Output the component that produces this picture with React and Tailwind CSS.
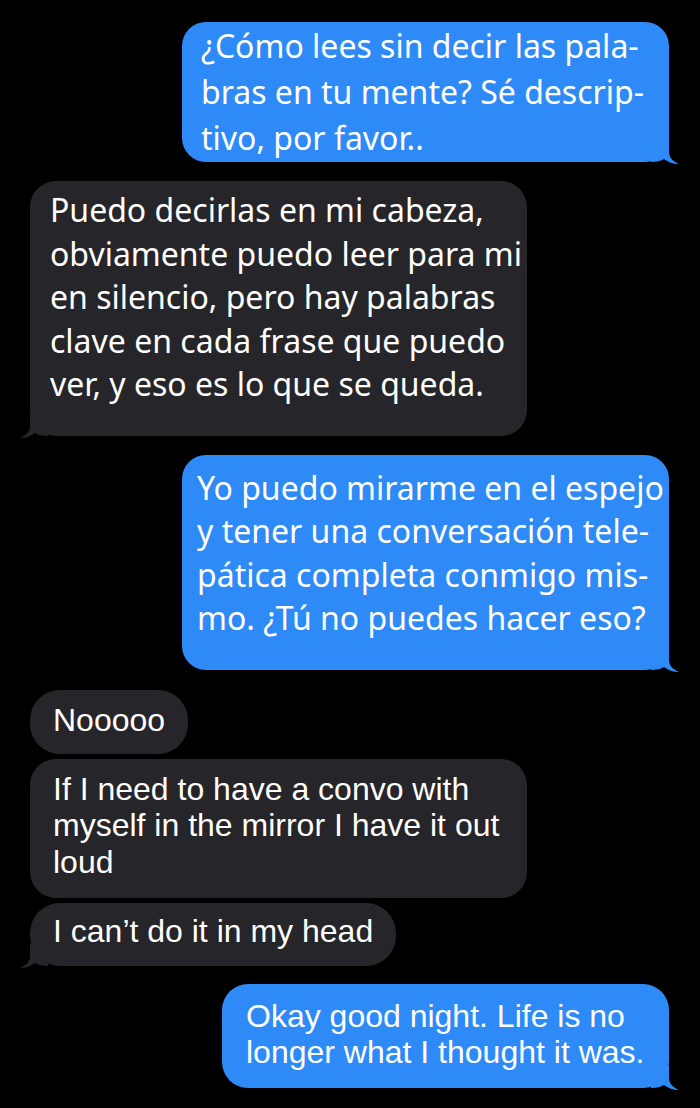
import { useState } from 'react';

const BLUE = '#2e8af6';
const GRAY = '#262529';

const noto = { fontFamily: '"Noto Sans", "Open Sans", sans-serif' };
const helv = { fontFamily: '"Liberation Sans", Arial, sans-serif' };

function TailRight({ color }) {
  return (
    <svg className="absolute right-[-10px] bottom-[-2px]" width="28" height="24" viewBox="0 0 28 24">
      <path d="M0 0 H18 V12 C18 17 21 21 28 24 C22 24 17 22 13 19 C10 21 6 22 0 22 Z" fill={color} />
    </svg>
  );
}

function TailLeft({ color }) {
  return (
    <svg className="absolute left-[-10px] bottom-[-2px]" width="28" height="24" viewBox="0 0 28 24">
      <path d="M28 0 H10 V12 C10 17 7 21 0 24 C6 24 11 22 15 19 C18 21 22 22 28 22 Z" fill={color} />
    </svg>
  );
}

const messages = [
  {
    id: 1, me: true, tail: true, font: noto,
    box: 'w-[487px] mt-[22px] pt-[1px] pb-[1px] pl-[19px] rounded-[24px] text-[32px] leading-[46px]',
    lines: ['¿Cómo lees sin decir las pala-', 'bras en tu mente? Sé descrip-', 'tivo, por favor..'],
  },
  {
    id: 2, me: false, tail: true, font: noto,
    box: 'w-[497px] mt-[19px] pt-[7px] pb-[30px] pl-[20px] rounded-[26px] text-[32px] leading-[43.5px]',
    lines: ['Puedo decirlas en mi cabeza,', 'obviamente puedo leer para mi', 'en silencio, pero hay palabras', 'clave en cada frase que puedo', 'ver, y eso es lo que se queda.'],
  },
  {
    id: 3, me: true, tail: true, font: noto,
    box: 'w-[487px] mt-[19px] pt-[11px] pb-[30px] pl-[15px] rounded-[24px] text-[32px] leading-[43.5px]',
    lines: ['Yo puedo mirarme en el espejo', 'y tener una conversación tele-', 'pática completa conmigo mis-', 'mo. ¿Tú no puedes hacer eso?'],
  },
  {
    id: 4, me: false, tail: false, font: helv,
    box: 'w-[158px] mt-[20px] pt-[12px] pb-[16px] pl-[23px] rounded-[30px] text-[32px] leading-[36px]',
    lines: ['Nooooo'],
  },
  {
    id: 5, me: false, tail: false, font: helv,
    box: 'w-[497px] mt-[5px] pt-[12px] pb-[18px] pl-[23px] rounded-[26px] text-[32px] leading-[36.5px]',
    lines: ['If I need to have a convo with', 'myself in the mirror I have it out', 'loud'],
  },
  {
    id: 6, me: false, tail: true, font: helv,
    box: 'w-[366px] mt-[5px] pt-[10px] pb-[17px] pl-[23px] rounded-[30px] text-[32px] leading-[36px]',
    lines: ['I can\u2019t do it in my head'],
  },
  {
    id: 7, me: true, tail: true, font: helv,
    box: 'w-[447px] mt-[18px] pt-[14px] pb-[18px] pl-[24px] rounded-[26px] text-[32px] leading-[36px]',
    lines: ['Okay good night. Life is no', 'longer what I thought it was.'],
  },
];

export default function App() {
  const [msgs] = useState(messages);

  return (
    <div className="w-[700px] h-[1108px] bg-black overflow-hidden flex flex-col">
      {msgs.map(m => {
        const color = m.me ? BLUE : GRAY;
        return (
          <div
            key={m.id}
            className={`relative text-white whitespace-nowrap ${m.box} ${m.me ? 'self-end mr-[31px]' : 'self-start ml-[30px]'}`}
            style={{ ...m.font, backgroundColor: color }}
          >
            {m.lines.map((l, i) => <div key={i}>{l}</div>)}
            {m.tail && (m.me ? <TailRight color={color} /> : <TailLeft color={color} />)}
          </div>
        );
      })}
    </div>
  );
}
